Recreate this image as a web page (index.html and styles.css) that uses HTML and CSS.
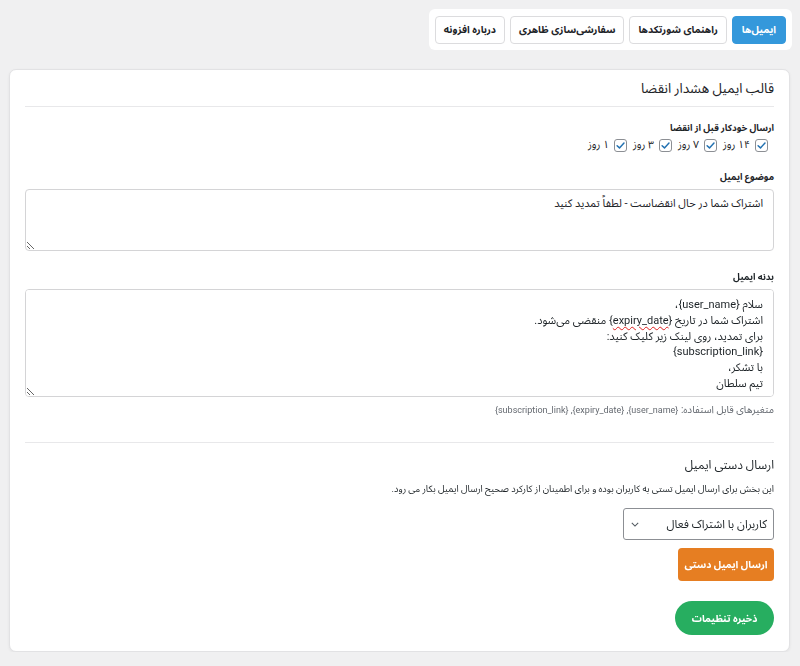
FILE: index.html
```html
<!DOCTYPE html>
<html lang="fa" dir="rtl">
<head>
<meta charset="utf-8">
<link rel="stylesheet" href="styles.css">
</head>
<body>
<div class="page">
  <nav class="tabs">
    <a class="tab active">ایمیل‌ها</a>
    <a class="tab">راهنمای شورتکدها</a>
    <a class="tab">سفارشی‌سازی ظاهری</a>
    <a class="tab">درباره افزونه</a>
  </nav>

  <section class="card">
    <h2 class="card-title">قالب ایمیل هشدار انقضا</h2>

    <div class="field field-days">
      <div class="label">ارسال خودکار قبل از انقضا</div>
      <div class="days">
        <label class="day"><span class="cb"><svg viewBox="0 0 12 12"><path d="M2.3 6.2 L4.9 8.6 L9.8 3.2" /></svg></span>۱۴ روز</label>
        <label class="day"><span class="cb"><svg viewBox="0 0 12 12"><path d="M2.3 6.2 L4.9 8.6 L9.8 3.2" /></svg></span>۷ روز</label>
        <label class="day"><span class="cb"><svg viewBox="0 0 12 12"><path d="M2.3 6.2 L4.9 8.6 L9.8 3.2" /></svg></span>۳ روز</label>
        <label class="day"><span class="cb"><svg viewBox="0 0 12 12"><path d="M2.3 6.2 L4.9 8.6 L9.8 3.2" /></svg></span>۱ روز</label>
      </div>
    </div>

    <div class="field field-subject">
      <div class="label">موضوع ایمیل</div>
      <div class="textbox subject">اشتراک شما در حال انقضاست - لطفاً تمدید کنید</div>
    </div>

    <div class="field field-body">
      <div class="label">بدنه ایمیل</div>
      <div class="textbox body-text">سلام {user_name}،<br>اشتراک شما در تاریخ {<span class="typo">expiry_date</span>} منقضی می‌شود.<br>برای تمدید، روی لینک زیر کلیک کنید:<br>{subscription_link}<br>با تشکر،<br>تیم سلطان</div>
      <div class="hint">متغیرهای قابل استفاده: <span class="vars">{user_name}, {expiry_date}, {subscription_link}</span></div>
    </div>

    <div class="manual">
      <h3 class="manual-title">ارسال دستی ایمیل</h3>
      <p class="manual-desc">این بخش برای ارسال ایمیل تستی به کاربران بوده و برای اطمینان از کارکرد صحیح ارسال ایمیل بکار می رود.</p>
      <div class="select">
        <span>کاربران با اشتراک فعال</span>
        <svg class="chev" viewBox="0 0 10 6"><path d="M1 1 L5 5 L9 1" /></svg>
      </div>
      <button class="btn btn-orange">ارسال ایمیل دستی</button>
    </div>

    <button class="btn btn-green">ذخیره تنظیمات</button>
  </section>
</div>
</body>
</html>
```

FILE: styles.css
```css
* { box-sizing: border-box; }
html, body {
  margin: 0;
  padding: 0;
  background: #f0f0f1;
}
body {
  font-family: Roboto, "Noto Sans Arabic", sans-serif;
  color: #1d2327;
  font-size: 13px;
}
.page {
  padding: 9px 8px 0 9px;
  display: flex;
  flex-direction: column;
  align-items: flex-start;
}
.tabs {
  display: flex;
  gap: 5px;
  background: #fff;
  border-radius: 6px;
  padding: 6px 6px;
  height: 41px;
  align-items: center;
}
.tab {
  display: flex;
  align-items: center;
  justify-content: center;
  height: 28px;
  padding: 0 8px;
  border: 1px solid #dcdcde;
  border-radius: 4px;
  font-size: 10px;
  font-weight: bold;
  color: #1d2327;
  background: #fff;
  white-space: nowrap;
}
.tab.active {
  padding: 0 9px;
  background: #3498db;
  border-color: #3498db;
  color: #fff;
}
.card {
  align-self: stretch;
  margin: 19px 2px 0 0;
  background: #fff;
  border: 1px solid #e2e2e4;
  border-radius: 7px;
  box-shadow: 0 1px 3px rgba(0,0,0,0.06);
  padding: 0 15px 16px;
  display: flex;
  flex-direction: column;
  align-items: flex-start;
}
.card-title {
  align-self: stretch;
  margin: 0;
  padding: 8px 0 8px;
  font-size: 13.5px;
  line-height: 20px;
  font-weight: normal;
  border-bottom: 1px solid #e8e8ea;
}
.field { align-self: stretch; }
.label {
  font-size: 9.2px;
  font-weight: bold;
  line-height: 14px;
}
.field-days { margin-top: 14px; }
.days {
  display: flex;
  gap: 6px;
  margin-top: 3px;
  padding-right: 6px;
}
.day {
  display: flex;
  align-items: center;
  gap: 5px;
  font-size: 10.5px;
  line-height: 14px;
  color: #1d2327;
}
.cb {
  width: 13px;
  height: 13px;
  border: 1px solid #8c8f94;
  border-radius: 3px;
  display: flex;
  align-items: center;
  justify-content: center;
  background: #fff;
}
.cb svg { width: 11px; height: 11px; }
.cb path { fill: none; stroke: #2271b1; stroke-width: 1.6; stroke-linecap: round; stroke-linejoin: round; }
.field-subject { margin-top: 18px; }
.textbox {
  margin-top: 5px;
  border: 1px solid #d4d4d6;
  border-radius: 4px;
  padding: 6px 10px;
  font-size: 11px;
  line-height: 16px;
  background: #fff;
  resize: vertical;
  overflow: auto;
}
.subject { height: 62px; }
.field-body { margin-top: 19px; }
.body-text { height: 108px; padding-top: 7px; line-height: 15.8px; }
.typo {
  text-decoration: underline wavy #e02020;
  text-decoration-thickness: 1px;
  text-underline-offset: 2px;
}
.hint {
  margin-top: 6px;
  font-size: 10px;
  line-height: 14px;
  color: #646970;
}
.vars { font-size: 9px; }
.manual {
  align-self: stretch;
  margin-top: 25px;
  border-top: 1px solid #e8e8ea;
  display: flex;
  flex-direction: column;
  align-items: flex-start;
}
.manual-title {
  margin: 12px 0 0;
  font-size: 12px;
  font-weight: normal;
  line-height: 20px;
}
.manual-desc {
  margin: 7px 0 0;
  font-size: 9.3px;
  line-height: 14px;
}
.select {
  margin-top: 12px;
  width: 151px;
  height: 32px;
  border: 1px solid #8c8f94;
  border-radius: 3px;
  display: flex;
  align-items: center;
  justify-content: space-between;
  padding: 0 6px 0 7px;
  font-size: 11.5px;
  white-space: nowrap;
}
.chev { width: 8px; height: 5px; }
.chev path { fill: none; stroke: #50575e; stroke-width: 1.3; }
.btn {
  border: none;
  font-family: inherit;
  font-weight: bold;
  color: #fff;
  font-size: 10px;
  cursor: pointer;
  white-space: nowrap;
}
.btn-orange {
  margin-top: 8px;
  width: 96px;
  height: 33px;
  background: #e67e22;
  border-radius: 4px;
}
.btn-green {
  margin-top: 20px;
  width: 99px;
  height: 34px;
  background: #27ae60;
  border-radius: 18px;
}
```
